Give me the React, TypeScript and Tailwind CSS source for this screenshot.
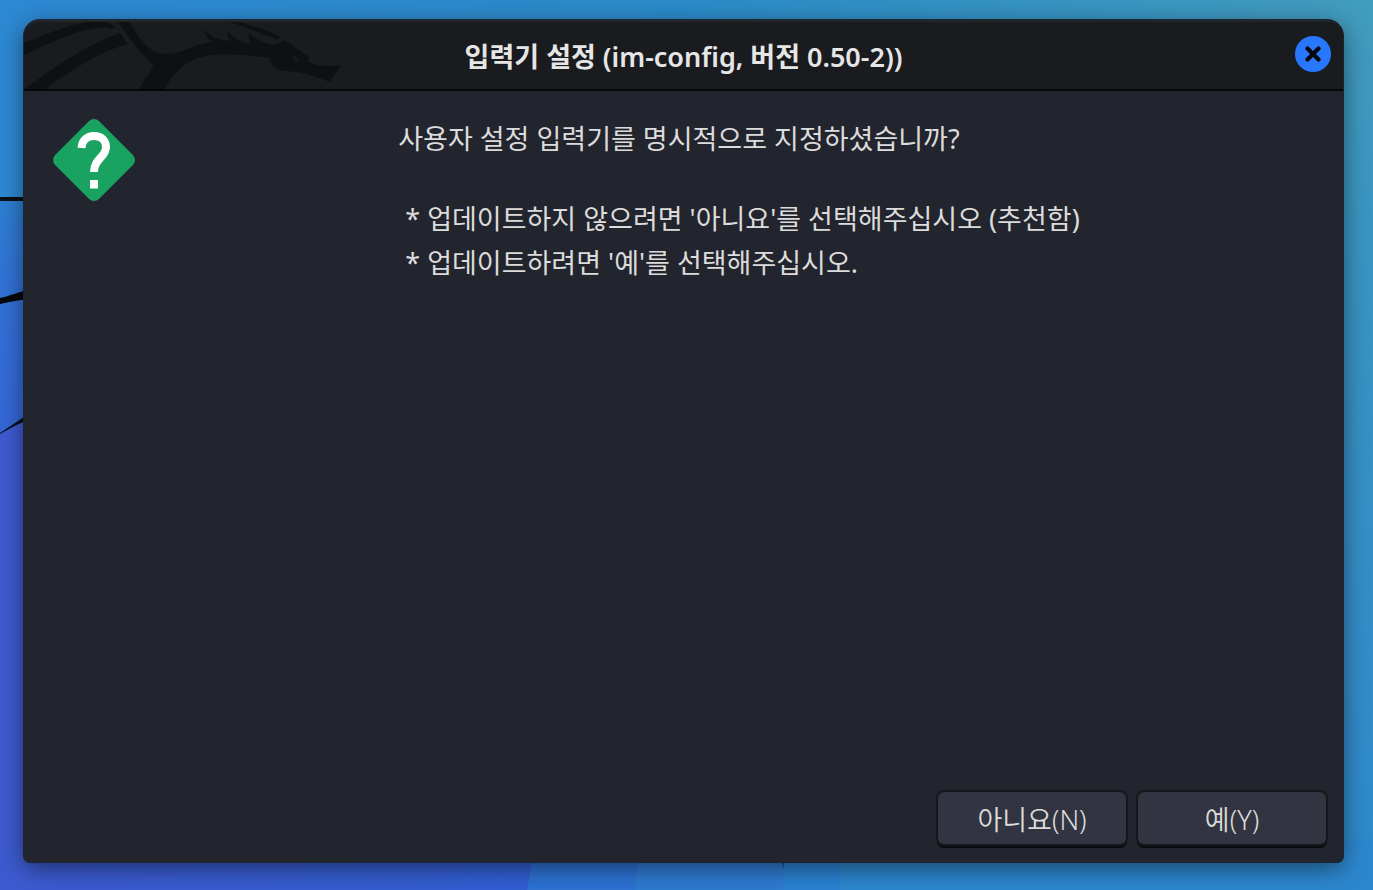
import React, { useState } from 'react';

const MESSAGE = [
    ' * 업데이트하지 않으려면 \'아니요\'를 선택해주십시오 (추천함)',
    ' * 업데이트하려면 \'예\'를 선택해주십시오.',
];

function Wallpaper() {
    return (
        <svg
            className="absolute inset-0 h-full w-full"
            viewBox="0 0 1373 890"
            preserveAspectRatio="none"
            aria-hidden="true"
        >
            <defs>
                <linearGradient id="sky" x1="0" y1="0" x2="1" y2="0">
                    <stop offset="0" stopColor="#2d89d3" />
                    <stop offset="0.5" stopColor="#2b8bc9" />
                    <stop offset="1" stopColor="#429cbd" />
                </linearGradient>
                <linearGradient id="right" x1="0" y1="0" x2="0" y2="1">
                    <stop offset="0" stopColor="#429cbd" />
                    <stop offset="0.3" stopColor="#3a94c3" />
                    <stop offset="1" stopColor="#2f89cc" />
                </linearGradient>
                <linearGradient id="left" x1="0" y1="0" x2="0" y2="1">
                    <stop offset="0" stopColor="#2d7fd2" />
                    <stop offset="0.35" stopColor="#3272d6" />
                    <stop offset="1" stopColor="#3566d8" />
                </linearGradient>
                <linearGradient id="floor" x1="0" y1="0" x2="1" y2="0">
                    <stop offset="0" stopColor="#3d5bd0" />
                    <stop offset="1" stopColor="#315fd4" />
                </linearGradient>
            </defs>
            <rect width="1373" height="890" fill="url(#sky)" />
            <rect x="1330" width="43" height="890" fill="url(#right)" />
            <path d="M0 199H300V440H0Z" fill="url(#left)" />
            <path d="M0 434L30 414L560 700L528 890H0Z" fill="url(#floor)" />
            <path d="M536 840L527 890H1373V840Z" fill="#2d72d4" />
            <path d="M638 840L636 890H1373V840Z" fill="#2e7bd2" />
            <path d="M783 840V890H1373V840Z" fill="#2b82d2" />
            <path d="M840 840V890H1373V840Z" fill="#2d87ce" />
            <path d="M0 197H30V201H0Z" fill="#0b1016" />
            <path d="M0 298C10 296 18 292 30 289V299C18 300 10 302 0 304Z" fill="#05070b" />
            <path d="M0 433L30 413V419Q15 425 0 434Z" fill="#0b1020" />
            <path d="M782 855H785L783 869Z" fill="#123a5c" />
        </svg>
    );
}

function DragonEmblem() {
    return (
        <svg className="h-[68px] w-[320px] text-[#0f1013]" viewBox="24 21 320 68" fill="currentColor" aria-hidden="true">
            <path d="M24 42C46 33 66 25 86 21H108L115 26L112 28L107 26C78 27 50 42 24 54Z" />
            <path d="M24 89C54 66 88 43 120 32L128 43C100 50 68 71 44 89Z" />
            <path d="M118 21H129C139 36 147 53 167 53C181 53 193 43 213 41C207 38 205 34 204 28C210 36 218 39 231 40C229 38 227 34 227 29C234 38 240 41 251 43C249 39 248 36 249 32C256 39 263 42 275 44L285 39L309 56L308 61C317 65 329 66 341 64L330 81C314 75 302 70 283 70C275 68 271 64 269 57C232 52 204 50 186 63C176 70 169 79 164 89H139C143 80 149 73 154 65C142 54 132 41 118 21Z" />
            <path d="M230 21H238C252 24 267 29 281 36L276 38C262 33 250 28 230 21Z" />
            <path d="M291 53C295 56 300 57 299 61C296 60 293 58 291 53Z" fill="#1a1b1f" />
        </svg>
    );
}

function QuestionIcon() {
    return (
        <svg className="mt-0.5 h-[82px] w-[82px] shrink-0" viewBox="0 0 82 82" role="img" aria-label="질문">
            <rect x="10" y="10" width="62" height="62" rx="7" fill="#1aa260" transform="rotate(45 41 41)" />
            <path
                d="M28.5 29C29 21.5 34 17 41 17C48.5 17 53 21.5 53 28C53 38.5 41 39.5 41 53"
                fill="none"
                stroke="#fff"
                strokeWidth="8"
            />
            <rect x="37" y="61" width="8" height="8.5" fill="#fff" />
        </svg>
    );
}

type DialogButtonProps = {
    label: string;
    onClick: () => void;
};

function DialogButton({ label, onClick }: DialogButtonProps) {
    return (
        <button
            type="button"
            onClick={onClick}
            className="flex h-[52px] w-[188px] items-center justify-center rounded-md bg-[#323541] pt-1 text-[27px] leading-10 font-[350] shadow-[0_0_0_2px_#16171c,0_3px_0_1px_#0a0b0e] hover:bg-[#3a3e4c]"
        >
            {label}
        </button>
    );
}

export default function App() {
    const [open, setOpen] = useState(true);
    const close = () => setOpen(false);

    return (
        <div className="relative flex min-h-screen flex-col overflow-hidden pt-5 pr-[30px] pb-7 pl-6 font-['Noto_Sans','Noto_Sans_CJK_KR',sans-serif] text-[#dcdcdc]">
            <Wallpaper />
            {open && (
                <div
                    role="dialog"
                    aria-labelledby="title"
                    className="relative flex flex-1 flex-col rounded-t-2xl rounded-b-md bg-[#23252e] shadow-[0_0_0_1px_#1b2632,0_6px_24px_rgba(0,0,0,0.5)]"
                >
                    <header className="relative flex h-[71px] items-center justify-between overflow-hidden rounded-t-2xl border-t-2 border-b-2 border-t-[#20262b] border-b-[#060709] bg-[#1a1b1f]">
                        <div className="flex flex-1">
                            <DragonEmblem />
                        </div>
                        <h1 id="title" className="pt-0.5 text-[27px] leading-10 font-semibold whitespace-nowrap text-[#e6e6e6]">
                            입력기 설정 (im-config, 버전 0.50-2))
                        </h1>
                        <div className="flex flex-1 justify-end pb-1">
                            <button
                                type="button"
                                aria-label="닫기"
                                onClick={close}
                                className="mr-3 flex size-9 items-center justify-center rounded-full bg-[#2777ff]"
                            >
                                <svg className="size-4" viewBox="0 0 16 16" aria-hidden="true">
                                    <path d="M2.5 2.5L13.5 13.5M13.5 2.5L2.5 13.5" stroke="#05070c" strokeWidth="4.2" strokeLinecap="round" />
                                </svg>
                            </button>
                        </div>
                    </header>

                    <main className="flex flex-1 items-start pt-[26px] pl-[29px]">
                        <QuestionIcon />
                        <div className="flex flex-1 justify-center">
                            <div className="text-[27px] leading-[44px] whitespace-pre">
                                <p className="mb-9">사용자 설정 입력기를 명시적으로 지정하셨습니까?</p>
                                {MESSAGE.map(line => (
                                    <p key={line}>{line}</p>
                                ))}
                            </div>
                        </div>
                    </main>

                    <footer className="flex justify-end gap-3 px-[17px] pb-[18px]">
                        <DialogButton label="아니요(N)" onClick={close} />
                        <DialogButton label="예(Y)" onClick={close} />
                    </footer>
                </div>
            )}
        </div>
    );
}
